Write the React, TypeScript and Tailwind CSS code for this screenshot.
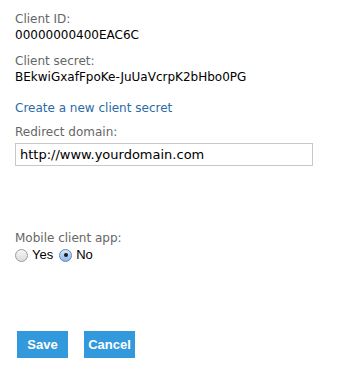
export default function App() {
  return (
    <div className="w-[343px] h-[372px] bg-white px-[15px] pt-[11px] text-[12px] leading-[16px] text-black font-['DejaVu_Sans',sans-serif]">
      <div className="text-[#666]">Client ID:</div>
      <div>00000000400EAC6C</div>

      <div className="mt-[10px] text-[#666]">Client secret:</div>
      <div>BEkwiGxafFpoKe-JuUaVcrpK2bHbo0PG</div>

      <a href="#" className="block mt-[15px] text-[#2a6aa6]">Create a new client secret</a>

      <div className="mt-[8px] text-[#666]">Redirect domain:</div>
      <input
        type="text"
        defaultValue="http://www.yourdomain.com"
        className="mt-[3px] block w-[298px] h-[23px] border border-[#c8c8c8] px-[4px] text-[13px] text-black outline-none font-['DejaVu_Sans',sans-serif]"
      />

      <div className="mt-[64px] text-[#666]">Mobile client app:</div>
      <div className="flex items-center gap-[4px] mt-[1px] font-['Liberation_Sans',sans-serif] text-[13px]">
        <span className="w-[13px] h-[13px] rounded-full border border-[#9a9a9a] bg-gradient-to-b from-[#f6f6f6] to-[#dcdcdc]" />
        <span>Yes</span>
        <span className="ml-[2px] w-[13px] h-[13px] rounded-full border border-[#5b88c0] bg-gradient-to-b from-[#d6e7fa] to-[#8fb7e8] flex items-center justify-center">
          <span className="w-[4px] h-[4px] rounded-full bg-[#1a1a1a]" />
        </span>
        <span>No</span>
      </div>

      <div className="flex gap-[16px] mt-[68px] pl-[2px] font-['Liberation_Sans',sans-serif]">
        <button className="w-[51px] h-[27px] bg-[#3399dd] text-white font-bold text-[13px]">Save</button>
        <button className="w-[51px] h-[27px] bg-[#3399dd] text-white font-bold text-[13px]">Cancel</button>
      </div>
    </div>
  );
}
